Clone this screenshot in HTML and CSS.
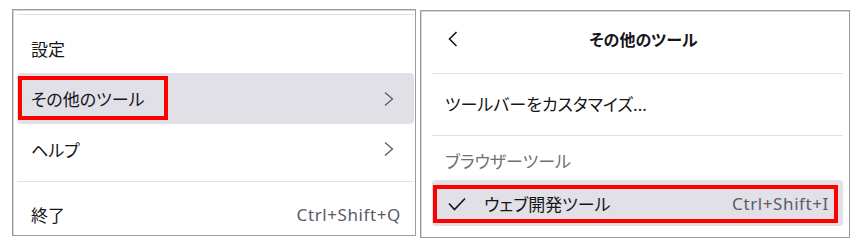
FILE: index.html
```html
<!DOCTYPE html>
<html lang="ja">
<head>
    <meta charset="UTF-8">
    <title>その他のツール</title>
    <link rel="stylesheet" href="styles.css">
</head>
<body>
    <div class="screens">
        <!-- main menu -->
        <div class="panel panel-main">
            <hr class="sep">
            <div class="item">設定</div>
            <div class="item item-hover">
                <span>その他のツール</span>
                <svg class="chevron" width="10" height="16" viewBox="0 0 10 16"><path d="M1 1.5 L8.5 8 L1 14.5" fill="none" stroke="#5b5b66" stroke-width="1.3"/></svg>
                <span class="mark mark-left"></span>
            </div>
            <div class="item">
                <span>ヘルプ</span>
                <svg class="chevron" width="10" height="16" viewBox="0 0 10 16"><path d="M1 1.5 L8.5 8 L1 14.5" fill="none" stroke="#5b5b66" stroke-width="1.3"/></svg>
            </div>
            <hr class="sep sep-mid">
            <div class="item">
                <span>終了</span>
                <span class="shortcut">Ctrl+Shift+Q</span>
            </div>
        </div>

        <!-- sub menu -->
        <div class="panel panel-sub">
            <div class="sub-header">
                <svg class="back" width="10" height="16" viewBox="0 0 10 16"><path d="M8.5 1 L1.5 8 L8.5 15" fill="none" stroke="#15141a" stroke-width="1.6"/></svg>
                <span class="sub-title">その他のツール</span>
            </div>
            <hr class="sep">
            <div class="item item-sub">ツールバーをカスタマイズ...</div>
            <hr class="sep sep-mid">
            <div class="group-label">ブラウザーツール</div>
            <div class="item item-sub item-hover item-checked">
                <svg class="check" width="18" height="14" viewBox="0 0 18 14"><path d="M1 6.5 L6.5 12.5 L17 1.5" fill="none" stroke="#15141a" stroke-width="1.6"/></svg>
                <span class="label">ウェブ開発ツール</span>
                <span class="shortcut">Ctrl+Shift+I</span>
                <span class="mark mark-right"></span>
            </div>
        </div>
    </div>
</body>
</html>
```

FILE: styles.css
```css
* {
    margin: 0;
    padding: 0;
    box-sizing: border-box;
}

body {
    background-color: #ffffff;
    color: #15141a;
    font-family: "Noto Sans", "Noto Sans CJK JP", sans-serif;
    font-size: 17px;
    font-feature-settings: "palt";
}

.screens {
    display: flex;
    align-items: flex-start;
    gap: 4px;
    padding: 9px 0 0 12px;
}

.panel {
    border: 1px solid #9c9c9c;
    box-shadow: inset 1px 1px 0 #d4d4d4;
    background-color: #ffffff;
}

.panel-main {
    width: 404px;
    height: 227px;
    padding: 4px 1px 0 4px;
}

.panel-sub {
    width: 430px;
    height: 228px;
    margin-top: 1px;
    padding: 0 6px 0 11px;
}

.sep {
    border: none;
    border-top: 1px solid #e0e0e6;
    margin: 0 0 8px;
}

.sep-mid {
    margin: 7px 0;
}

.item {
    position: relative;
    display: flex;
    align-items: center;
    justify-content: space-between;
    height: 50px;
    padding: 0 20px 0 14px;
    border-radius: 4px;
}

.item-hover {
    background-color: #e0e0e6;
    height: 51px;
}

.chevron {
    display: block;
}

.shortcut {
    color: #5b5b66;
    letter-spacing: 0.6px;
    margin-right: -7px;
}

/* red annotation boxes */
.mark {
    position: absolute;
    border: 4px solid #ff0000;
}

.mark-left {
    left: 1px;
    top: 3px;
    width: 150px;
    height: 44px;
}

.mark-right {
    left: 1px;
    top: 5px;
    width: 405px;
    height: 38px;
}

.sub-header {
    display: flex;
    align-items: center;
    height: 53px;
    padding: 0 28px 0 16px;
    margin: 1px 0 8px;
}

.back {
    display: block;
    margin-right: 14px;
}

.sub-title {
    flex: 1;
    text-align: center;
    font-weight: 700;
    font-size: 16px;
}

.item-sub {
    padding-left: 13px;
    height: 50px;
    margin-top: -4px;
}

.group-label {
    color: #6e6e78;
    height: 34px;
    padding-left: 13px;
    display: flex;
    align-items: center;
}

.item-checked {
    justify-content: flex-start;
    height: 46px;
    margin-top: 3px;
    padding: 0 14px 0 16px;
}

.item-checked .shortcut {
    margin-right: 0;
}

.check {
    display: block;
    margin-top: 1px;
}

.item-checked .label {
    flex: 1;
    margin-left: 18px;
}
```
